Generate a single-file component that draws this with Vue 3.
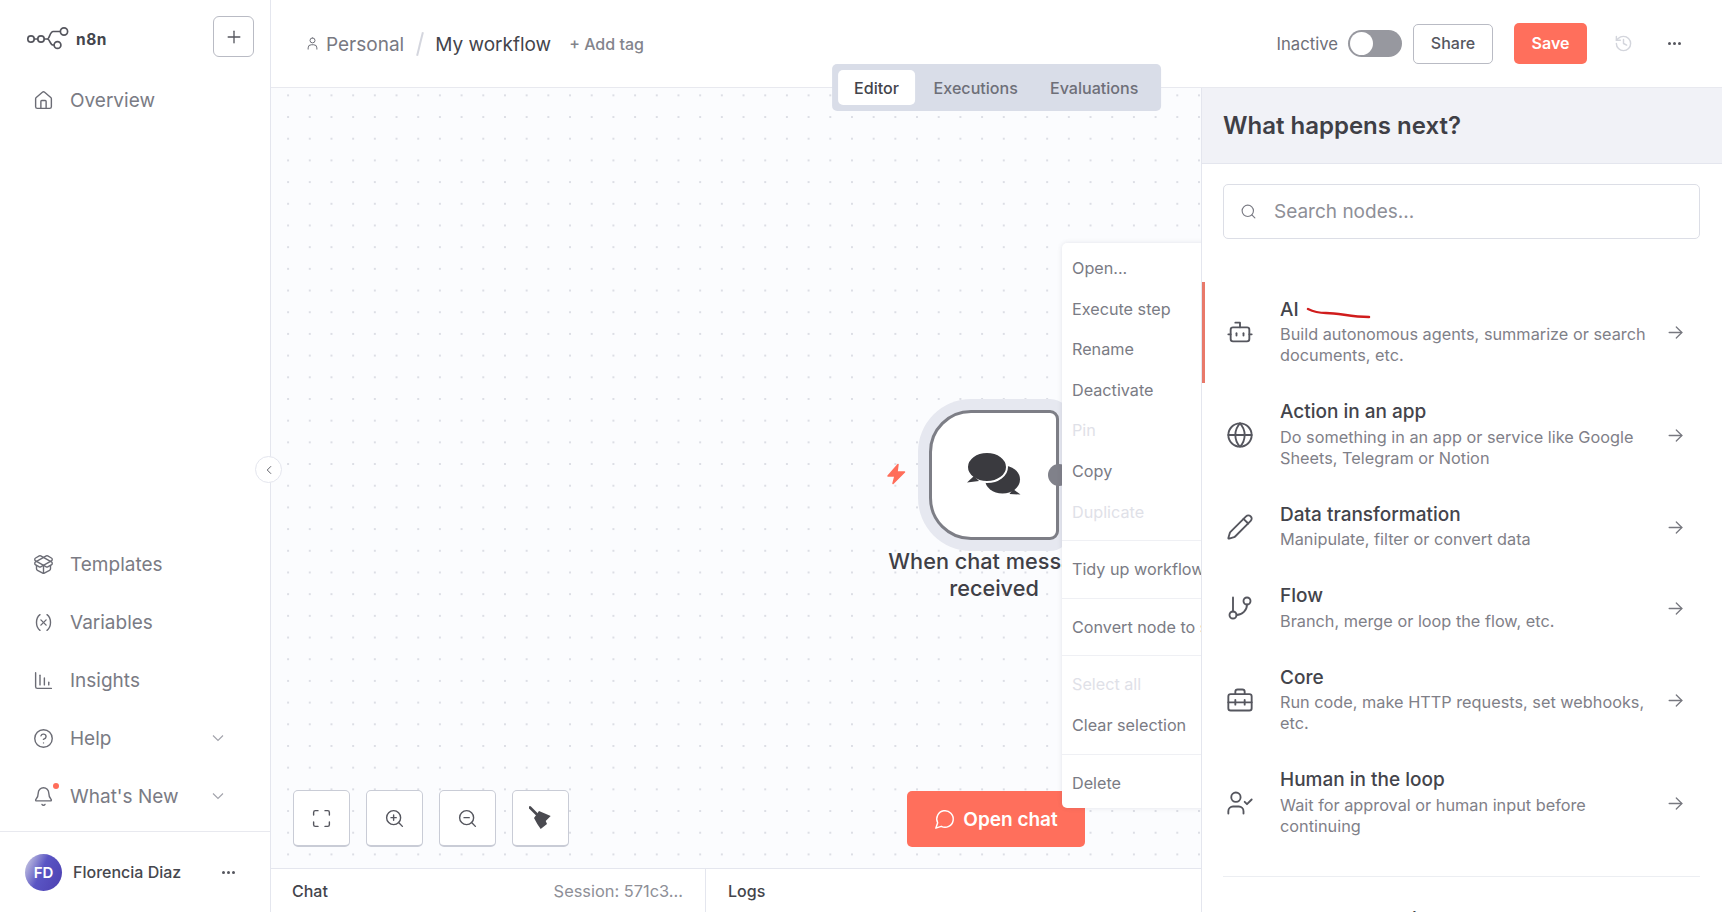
<script setup>
const ic = {
  home: ["M15 21v-8a1 1 0 0 0-1-1h-4a1 1 0 0 0-1 1v8", "M3 10a2 2 0 0 1 .709-1.528l7-5.999a2 2 0 0 1 2.582 0l7 5.999A2 2 0 0 1 21 10v9a2 2 0 0 1-2 2H5a2 2 0 0 1-2-2z"],
  templates: ["M12 22v-9", "M15.17 2.21a1.67 1.67 0 0 1 1.63 0L21 4.57a1.93 1.93 0 0 1 0 3.36L8.82 14.79a1.655 1.655 0 0 1-1.64 0L3 12.43a1.93 1.93 0 0 1 0-3.36z", "M20 13v3.87a2.06 2.06 0 0 1-1.11 1.83l-6 3.08a1.93 1.93 0 0 1-1.78 0l-6-3.08A2.06 2.06 0 0 1 4 16.87V13", "M21 12.43a1.93 1.93 0 0 0 0-3.36L8.83 2.2a1.64 1.64 0 0 0-1.63 0L3 4.57a1.93 1.93 0 0 0 0 3.36l12.18 6.86a1.636 1.636 0 0 0 1.63 0z"],
  variable: ["M8 21s-4-3-4-9 4-9 4-9", "M16 3s4 3 4 9-4 9-4 9", "M15 9l-6 6", "m9 9 6 6"],
  insights: ["M3 3v16a2 2 0 0 0 2 2h16", "M8 17V6", "M13 17V9", "M18 17v-3"],
  help: ["M12 2a10 10 0 1 0 0 20 10 10 0 0 0 0-20", "M9.09 9a3 3 0 0 1 5.83 1c0 2-3 3-3 3", "M12 17h.01"],
  bell: ["M10.268 21a2 2 0 0 0 3.464 0", "M3.262 15.326A1 1 0 0 0 4 17h16a1 1 0 0 0 .74-1.673C19.41 13.956 18 12.499 18 8A6 6 0 0 0 6 8c0 4.499-1.411 5.956-2.738 7.326"],
  bot: ["M12 8V4H8", "M6 8h12a2 2 0 0 1 2 2v8a2 2 0 0 1-2 2H6a2 2 0 0 1-2-2v-8a2 2 0 0 1 2-2z", "M2 14h2", "M20 14h2", "M15 13v2", "M9 13v2"],
  globe: ["M12 2a10 10 0 1 0 0 20 10 10 0 0 0 0-20", "M12 2a14.5 14.5 0 0 0 0 20 14.5 14.5 0 0 0 0-20", "M2 12h20"],
  pen: ["M21.174 6.812a1 1 0 0 0-3.986-3.987L3.842 16.174a2 2 0 0 0-.5.83l-1.321 4.352a.5.5 0 0 0 .623.622l4.353-1.32a2 2 0 0 0 .83-.497z", "m15 5 4 4"],
  flow: ["M6 3v12", "M18 3a3 3 0 1 0 0 6 3 3 0 0 0 0-6", "M6 15a3 3 0 1 0 0 6 3 3 0 0 0 0-6", "M18 9a9 9 0 0 1-9 9"],
  core: ["M16 7V5a2 2 0 0 0-2-2h-4a2 2 0 0 0-2 2v2", "M4 7h16a2 2 0 0 1 2 2v10a2 2 0 0 1-2 2H4a2 2 0 0 1-2-2V9a2 2 0 0 1 2-2z", "M2 14h20", "M8 12v4", "M16 12v4"],
  human: ["M15 21v-2a4 4 0 0 0-4-4H6a4 4 0 0 0-4 4v2", "M8.5 3a4 4 0 1 0 0 8 4 4 0 0 0 0-8", "m16 11 2 2 4-4"],
  arrow: ["M4 12h16", "m13 5 7 7-7 7"],
  search: ["M11 3a8 8 0 1 0 0 16 8 8 0 0 0 0-16", "m21 21-4.3-4.3"],
  history: ["M3 12a9 9 0 1 0 9-9 9.75 9.75 0 0 0-6.74 2.74L3 8", "M3 3v5h5", "M12 7v5l4 2"],
  person: ["M12 3a4 4 0 1 0 0 8 4 4 0 0 0 0-8", "M5 21v-2a5 5 0 0 1 5-5h4a5 5 0 0 1 5 5v2"],
  plus: ["M5 12h14", "M12 5v14"],
  left: ["m15 18-6-6 6-6"],
  down: ["m6 9 6 6 6-6"],
  fit: ["M3 8V5a2 2 0 0 1 2-2h3", "M16 3h3a2 2 0 0 1 2 2v3", "M21 16v3a2 2 0 0 1-2 2h-3", "M8 21H5a2 2 0 0 1-2-2v-3"],
  zoomIn: ["M11 3a8 8 0 1 0 0 16 8 8 0 0 0 0-16", "m21 21-4.3-4.3", "M11 8v6", "M8 11h6"],
  zoomOut: ["M11 3a8 8 0 1 0 0 16 8 8 0 0 0 0-16", "m21 21-4.3-4.3", "M8 11h6"],
  message: ["M7.9 20A9 9 0 1 0 4 16.1L2 22z"],
};

const topNav = [{ label: "Overview", icon: ic.home }];
const bottomNav = [
  { label: "Templates", icon: ic.templates },
  { label: "Variables", icon: ic.variable },
  { label: "Insights", icon: ic.insights },
  { label: "Help", icon: ic.help, more: true },
  { label: "What's New", icon: ic.bell, more: true, dot: true },
];

const tools = [ic.fit, ic.zoomIn, ic.zoomOut];

// sections are separated by a divider
const menu = [
  [{ t: "Open..." }, { t: "Execute step" }, { t: "Rename" }, { t: "Deactivate" }, { t: "Pin", off: true }, { t: "Copy" }, { t: "Duplicate", off: true }],
  [{ t: "Tidy up workflow" }],
  [{ t: "Convert node to sub-workflow" }],
  [{ t: "Select all", off: true }, { t: "Clear selection" }],
  [{ t: "Delete" }],
];

const nodes = [
  { title: "AI", desc: "Build autonomous agents, summarize or search documents, etc.", icon: ic.bot, active: true },
  { title: "Action in an app", desc: "Do something in an app or service like Google Sheets, Telegram or Notion", icon: ic.globe },
  { title: "Data transformation", desc: "Manipulate, filter or convert data", icon: ic.pen },
  { title: "Flow", desc: "Branch, merge or loop the flow, etc.", icon: ic.flow },
  { title: "Core", desc: "Run code, make HTTP requests, set webhooks, etc.", icon: ic.core },
  { title: "Human in the loop", desc: "Wait for approval or human input before continuing", icon: ic.human },
];
</script>

<template>
  <div class="app">
    <aside class="sidebar">
      <div class="brand">
        <svg class="logo" width="42" height="24" viewBox="0 0 42 24" fill="none" stroke="#55565e" stroke-width="1.7">
          <circle cx="4" cy="13" r="3.2" />
          <circle cx="14" cy="13" r="3.2" />
          <path d="M7.2 13h3.6M17.2 13h3c2.5 0 2.5-7.500 6-7.500h7M20.200 13c3 0 2.500 6 6 6h.8" />
          <circle cx="37" cy="5.500" r="3.600" />
          <circle cx="30.500" cy="19" r="3.400" />
        </svg>
        <span class="brand-name">n8n</span>
        <button class="add-btn">
          <svg width="20" height="20" viewBox="0 0 24 24" class="ico"><path v-for="d in ic.plus" :key="d" :d="d" /></svg>
        </button>
      </div>

      <nav class="nav-top">
        <div v-for="n in topNav" :key="n.label" class="nav-item">
          <svg width="21" height="21" viewBox="0 0 24 24" class="ico"><path v-for="d in n.icon" :key="d" :d="d" /></svg>
          <span>{{ n.label }}</span>
        </div>
      </nav>

      <nav class="nav-bottom">
        <div v-for="n in bottomNav" :key="n.label" class="nav-item">
          <span class="nav-ico">
            <svg width="21" height="21" viewBox="0 0 24 24" class="ico"><path v-for="d in n.icon" :key="d" :d="d" /></svg>
            <i v-if="n.dot" class="red-dot"></i>
          </span>
          <span>{{ n.label }}</span>
          <svg v-if="n.more" class="chev" width="20" height="20" viewBox="0 0 24 24"><path v-for="d in ic.down" :key="d" :d="d" /></svg>
        </div>
      </nav>

      <div class="user">
        <div class="avatar">FD</div>
        <span class="user-name">Florencia Diaz</span>
        <span class="dots"><i></i><i></i><i></i></span>
      </div>

      <button class="collapse">
        <svg width="14" height="14" viewBox="0 0 24 24" class="ico"><path v-for="d in ic.left" :key="d" :d="d" /></svg>
      </button>
    </aside>

    <main class="main">
      <header class="topbar">
        <div class="crumbs">
          <svg width="15" height="15" viewBox="0 0 24 24" class="ico"><path v-for="d in ic.person" :key="d" :d="d" /></svg>
          <span class="crumb-project">Personal</span>
          <span class="slash"></span>
          <span class="crumb-name">My workflow</span>
          <span class="add-tag">+ Add tag</span>
        </div>
        <div class="actions">
          <span class="state">Inactive</span>
          <span class="toggle"><i></i></span>
          <button class="btn-share">Share</button>
          <button class="btn-save">Save</button>
          <svg class="history" width="19" height="19" viewBox="0 0 24 24"><path v-for="d in ic.history" :key="d" :d="d" /></svg>
          <span class="dots top-dots"><i></i><i></i><i></i></span>
        </div>
      </header>

      <div class="tabs">
        <span class="tab on">Editor</span>
        <span class="tab">Executions</span>
        <span class="tab">Evaluations</span>
      </div>

      <div class="work">
        <section class="editor">
          <div class="canvas">
            <div class="node">
              <svg class="bolt" width="24" height="24" viewBox="0 0 24 24"><path d="M14 2.500 4 14h7l-2 7.500L20.500 10H13z" /></svg>
              <div class="node-box">
                <svg class="chat-ico" width="54" height="43" viewBox="0 0 54 43">
                  <ellipse cx="35.500" cy="27.500" rx="17.500" ry="14" fill="#3a3a3f" />
                  <path d="M46 37l7.500 5.500-11-.5z" fill="#3a3a3f" />
                  <ellipse cx="20" cy="15" rx="20" ry="15" fill="#3a3a3f" stroke="#fff" stroke-width="2" />
                  <path d="M7 24l-7 6.500 12-1.500z" fill="#3a3a3f" />
                </svg>
                <i class="port"></i>
              </div>
              <div class="node-label">When chat message received</div>
            </div>

            <div class="tools">
              <button v-for="(t, i) in tools" :key="i" class="tool">
                <svg width="21" height="21" viewBox="0 0 24 24" class="ico"><path v-for="d in t" :key="d" :d="d" /></svg>
              </button>
              <button class="tool">
                <svg width="23" height="24" viewBox="0 0 23 24">
                  <path d="M1 1.500 7.500 8" fill="none" stroke="#4a4a50" stroke-width="2.600" stroke-linecap="round" />
                  <path fill="#4a4a50" d="M5 12l5-7 11.700 5-5 5 1.300 3-6.300 5-3.400-5z" />
                </svg>
              </button>
            </div>

            <button class="open-chat">
              <svg width="22" height="22" viewBox="0 0 24 24" class="ico"><path v-for="d in ic.message" :key="d" :d="d" /></svg>
              Open chat
            </button>

            <div class="menu">
              <div v-for="(group, i) in menu" :key="i" class="menu-group">
                <div v-for="m in group" :key="m.t" class="menu-item" :class="{ off: m.off }">{{ m.t }}</div>
              </div>
            </div>
          </div>

          <div class="bottom">
            <div class="chat-tab">
              <span class="b-title">Chat</span>
              <span class="session">Session: 571c3...</span>
            </div>
            <div class="logs-tab"><span class="b-title">Logs</span></div>
          </div>
        </section>

        <aside class="panel">
          <h2 class="panel-title">What happens next?</h2>
          <div class="panel-body">
            <div class="search">
              <svg width="17" height="17" viewBox="0 0 24 24" class="ico"><path v-for="d in ic.search" :key="d" :d="d" /></svg>
              <span>Search nodes...</span>
            </div>
            <div class="list">
              <div v-for="n in nodes" :key="n.title" class="row" :class="{ active: n.active }">
                <svg class="row-ico ico" width="28" height="28" viewBox="0 0 24 24"><path v-for="d in n.icon" :key="d" :d="d" /></svg>
                <div class="row-text">
                  <div class="row-title">{{ n.title }}</div>
                  <div class="row-desc">{{ n.desc }}</div>
                </div>
                <svg class="row-arrow ico" width="19" height="19" viewBox="0 0 24 24"><path v-for="d in ic.arrow" :key="d" :d="d" /></svg>
                <svg v-if="n.active" class="scribble" width="66" height="14" viewBox="0 0 66 14"><path d="M2 3c6 3 10 4 18 4 14 0 24 4 43 4" /></svg>
              </div>
            </div>
            <div class="extra">Add another trigger</div>
          </div>
        </aside>
      </div>
    </main>
  </div>
</template>

<style scoped>
.app {
  display: flex;
  width: 100%;
  height: 912px;
  overflow: hidden;
  background: #fff;
  color: #3f3f46;
  font-family: Inter, "Liberation Sans", sans-serif;
}
.ico {
  fill: none;
  stroke: currentColor;
  stroke-width: 1.6;
  stroke-linecap: round;
  stroke-linejoin: round;
}
button {
  font-family: inherit;
  background: #fff;
  cursor: pointer;
}

/* sidebar */
.sidebar {
  position: relative;
  z-index: 3;
  flex: 0 0 271px;
  display: flex;
  flex-direction: column;
  box-sizing: border-box;
  border-right: 1px solid #e4e6ee;
  background: #fff;
}
.brand {
  display: flex;
  align-items: center;
  height: 74px;
  padding: 0 16px 0 27px;
  box-sizing: border-box;
}
.logo {
  margin-top: 2px;
}
.brand-name {
  margin-left: 7px;
  margin-top: 4px;
  font-size: 15.500px;
  font-weight: 700;
  letter-spacing: 0.5px;
  color: #44454c;
}
.add-btn {
  margin-left: auto;
  margin-top: -1px;
  width: 41px;
  height: 41px;
  padding: 0;
  display: flex;
  align-items: center;
  justify-content: center;
  border: 1px solid #b9bbc4;
  border-radius: 6px;
  color: #55565e;
}
.nav-item {
  display: flex;
  align-items: center;
  height: 58px;
  padding: 0 33px;
  font-size: 19px;
  color: #7a7b84;
}
.nav-top .nav-item {
  height: 52px;
}
.nav-item .ico {
  color: #6b6c75;
}
.nav-top .ico {
  margin-right: 16px;
}
.nav-ico {
  position: relative;
  display: flex;
  margin-right: 16px;
}
.red-dot {
  position: absolute;
  top: -3px;
  right: -5px;
  width: 6px;
  height: 6px;
  border-radius: 50%;
  background: #ff6d5a;
}
.chev {
  margin-left: auto;
  margin-right: 9px;
  fill: none;
  stroke: #a3a4ac;
  stroke-width: 1.400;
}
.nav-bottom {
  margin-top: auto;
  padding-bottom: 6px;
}
.user {
  display: flex;
  align-items: center;
  height: 81px;
  padding: 0 35px 0 25px;
  border-top: 1px solid #e8e9ef;
  box-sizing: border-box;
}
.avatar {
  width: 37px;
  height: 37px;
  border-radius: 50%;
  display: flex;
  align-items: center;
  justify-content: center;
  color: #fff;
  font-size: 15px;
  font-weight: 600;
  background: linear-gradient(115deg, #d8d8e6 0%, #5a55c4 45%, #4c3fb0 100%);
}
.user-name {
  margin-left: 11px;
  font-size: 16px;
  font-weight: 500;
  color: #46474e;
}
.dots {
  display: flex;
  gap: 2px;
  margin-left: auto;
}
.dots i {
  width: 3px;
  height: 3px;
  border-radius: 50%;
  background: #55565e;
}
.collapse {
  position: absolute;
  right: -12px;
  top: 456px;
  width: 27px;
  height: 27px;
  padding: 0;
  display: flex;
  align-items: center;
  justify-content: center;
  border: 1px solid #e4e6ee;
  border-radius: 50%;
  color: #55565e;
}

/* header */
.main {
  position: relative;
  flex: 1;
  min-width: 0;
  display: flex;
  flex-direction: column;
}
.topbar {
  flex: 0 0 88px;
  display: flex;
  align-items: center;
  box-sizing: border-box;
  border-bottom: 1px solid #e8e9ef;
  padding: 0 41px 0 34px;
}
.crumbs {
  display: flex;
  align-items: center;
  color: #6e6f78;
}
.crumb-project {
  margin-left: 6px;
  margin-top: 2px;
  font-size: 19px;
  color: #787982;
}
.slash {
  width: 2px;
  height: 24px;
  margin: 0 14px 0 15px;
  background: #d4d6de;
  transform: rotate(14deg);
}
.crumb-name {
  margin-top: 2px;
  font-size: 19px;
  color: #43444b;
}
.add-tag {
  margin-left: 18px;
  font-size: 16px;
  font-weight: 500;
  color: #83848c;
}
.actions {
  display: flex;
  align-items: center;
  margin-left: auto;
}
.state {
  font-size: 16.700px;
  color: #6e6f78;
}
.toggle {
  display: flex;
  align-items: center;
  box-sizing: border-box;
  width: 54px;
  height: 27px;
  margin-left: 10px;
  padding: 2px;
  border-radius: 14px;
  background: #97989f;
}
.toggle i {
  width: 23px;
  height: 23px;
  border-radius: 50%;
  background: #fff;
}
.btn-share {
  width: 80px;
  height: 40px;
  margin-left: 11px;
  padding-bottom: 2px;
  font-size: 16px;
  font-weight: 500;
  color: #55565e;
  border: 1px solid #b9bbc4;
  border-radius: 5px;
}
.btn-save {
  width: 73px;
  height: 41px;
  margin-left: 21px;
  padding-bottom: 2px;
  font-size: 16px;
  font-weight: 600;
  color: #fff;
  border: none;
  border-radius: 5px;
  background: #ff6f5c;
}
.history {
  margin-left: 27px;
  fill: none;
  stroke: #d3d5dc;
  stroke-width: 1.800;
  stroke-linecap: round;
  stroke-linejoin: round;
}
.top-dots {
  margin-left: 35px;
}

/* tabs */
.tabs {
  position: absolute;
  z-index: 2;
  top: 64px;
  left: 50%;
  transform: translateX(-50%);
  display: flex;
  align-items: center;
  box-sizing: border-box;
  height: 47px;
  padding: 0 7px 0 6px;
  border-radius: 5px;
  background: #d9dde8;
}
.tab {
  padding: 0 16px;
  font-size: 16.100px;
  font-weight: 500;
  color: #6e6f78;
}
.tab.on {
  display: flex;
  align-items: center;
  height: 35px;
  margin-right: 2px;
  padding: 0 16.500px;
  border-radius: 5px;
  background: #fff;
  color: #43444b;
}

/* canvas */
.work {
  flex: 1;
  min-height: 0;
  display: flex;
}
.editor {
  flex: 1;
  min-width: 0;
  display: flex;
  flex-direction: column;
}
.canvas {
  position: relative;
  flex: 1;
  overflow: hidden;
  background-color: #fbfcfe;
  background-image: radial-gradient(circle, #dcdee5 0.8px, transparent 1.100px);
  background-size: 21.700px 21.700px;
  background-position: 6.250px -3.500px;
}
.node {
  position: absolute;
  left: 658px;
  top: 322px;
  width: 130px;
}
.bolt {
  position: absolute;
  left: -45px;
  top: 52px;
  fill: #ff6d5a;
  stroke: #ff6d5a;
  stroke-width: 1.500;
  stroke-linejoin: round;
}
.node-box {
  position: relative;
  display: flex;
  align-items: center;
  justify-content: center;
  box-sizing: border-box;
  height: 130px;
  border: 3px solid #7d7e86;
  border-radius: 42px 9px 9px 42px;
  background: #fff;
  box-shadow: 0 0 0 11px #e6e8f0;
}
.chat-ico {
  margin-top: -4px;
  margin-left: -1px;
}
.port {
  position: absolute;
  right: -14px;
  top: 50%;
  width: 22px;
  height: 22px;
  margin-top: -11px;
  border-radius: 50%;
  background: #80818a;
}
.node-label {
  position: absolute;
  left: -65px;
  width: 260px;
  top: 138px;
  text-align: center;
  font-size: 21.700px;
  font-weight: 500;
  line-height: 27px;
  color: #3f3f46;
}
.tools {
  position: absolute;
  left: 22px;
  bottom: 21px;
  display: flex;
  gap: 16px;
}
.tool {
  width: 57px;
  height: 57px;
  padding: 0;
  display: flex;
  align-items: center;
  justify-content: center;
  border: 1px solid #c9ccd6;
  border-bottom-width: 2px;
  border-radius: 5px;
  color: #55565e;
}
.open-chat {
  position: absolute;
  left: 636px;
  bottom: 21px;
  width: 178px;
  height: 56px;
  display: flex;
  align-items: center;
  justify-content: center;
  gap: 7px;
  padding: 0;
  border: none;
  border-radius: 5px;
  background: #ff6f5c;
  color: #fff;
  font-size: 19px;
  font-weight: 600;
}
.menu {
  position: absolute;
  left: 791px;
  top: 155px;
  width: 240px;
  box-sizing: border-box;
  padding: 5px 0;
  border-radius: 5px;
  background: #fff;
  box-shadow: 0 0 5px rgba(60, 60, 90, 0.12);
}
.menu-group {
  padding: 8px 0;
  border-bottom: 1px solid #eff0f4;
}
.menu-group:first-child {
  padding-top: 0;
}
.menu-group:last-child {
  padding-bottom: 0;
  border-bottom: none;
}
.menu-item {
  height: 40.600px;
  line-height: 40.600px;
  padding-left: 10px;
  font-size: 16.200px;
  white-space: nowrap;
  color: #7a7b84;
}
.menu-item.off {
  color: #dfe1e8;
}

/* bottom tabs */
.bottom {
  flex: 0 0 44px;
  display: flex;
  align-items: center;
  box-sizing: border-box;
  border-top: 1px solid #e4e6ee;
  font-size: 16px;
}
.chat-tab {
  flex: 0 0 435px;
  height: 100%;
  box-sizing: border-box;
  display: flex;
  align-items: center;
  justify-content: space-between;
  padding: 0 22px 0 21px;
  border-right: 1px solid #e4e6ee;
}
.logs-tab {
  padding-left: 22px;
}
.b-title {
  font-weight: 500;
  color: #43444b;
}
.session {
  font-size: 16.400px;
  color: #8e8f97;
}

/* right panel */
.panel {
  position: relative;
  z-index: 1;
  flex: 0 0 521px;
  display: flex;
  flex-direction: column;
  box-sizing: border-box;
  border-left: 1px solid #e4e6ee;
  background: #fff;
}
.panel-title {
  display: flex;
  align-items: center;
  flex: 0 0 76px;
  margin: 0;
  padding-left: 21px;
  box-sizing: border-box;
  border-bottom: 1px solid #e4e6ee;
  background: #f1f2f7;
  font-size: 24px;
  font-weight: 600;
  color: #3f3f46;
}
.panel-body {
  padding: 20px 22px 0 21px;
}
.search {
  display: flex;
  align-items: center;
  gap: 17px;
  height: 55px;
  box-sizing: border-box;
  padding-left: 16px;
  border: 1px solid #dcdee6;
  border-radius: 5px;
  font-size: 19px;
  color: #8e8f97;
}
.search .ico {
  color: #7a7b84;
}
.list {
  margin-top: 41px;
  padding-bottom: 23px;
  border-bottom: 1px solid #eceef2;
}
.row {
  position: relative;
  display: flex;
  align-items: center;
  padding: 16.500px 0;
}
.row.active::before {
  content: "";
  position: absolute;
  left: -21px;
  top: 2px;
  bottom: 0;
  width: 3px;
  background: #e8796a;
}
.row-ico {
  flex: none;
  margin-left: 3px;
  margin-top: 2px;
  color: #55565e;
}
.row-text {
  flex: 1;
  min-width: 0;
  margin-left: 26px;
  padding-right: 16px;
}
.row-title {
  font-size: 19px;
  font-weight: 500;
  line-height: 26px;
  margin-bottom: 1.500px;
  color: #43444b;
}
.row-desc {
  font-size: 16.300px;
  line-height: 21px;
  color: #7f8088;
}
.row-arrow {
  flex: none;
  margin-right: 15px;
  margin-top: 3px;
  color: #77787f;
}
.scribble {
  position: absolute;
  left: 83px;
  top: 26px;
  fill: none;
  stroke: #d01c1c;
  stroke-width: 2.500;
  stroke-linecap: round;
}
.extra {
  margin-top: 31px;
  margin-left: 58px;
  font-size: 19px;
  font-weight: 500;
  color: #43444b;
}
</style>

<style>
html,
body {
  margin: 0;
  overflow: hidden;
}
</style>
